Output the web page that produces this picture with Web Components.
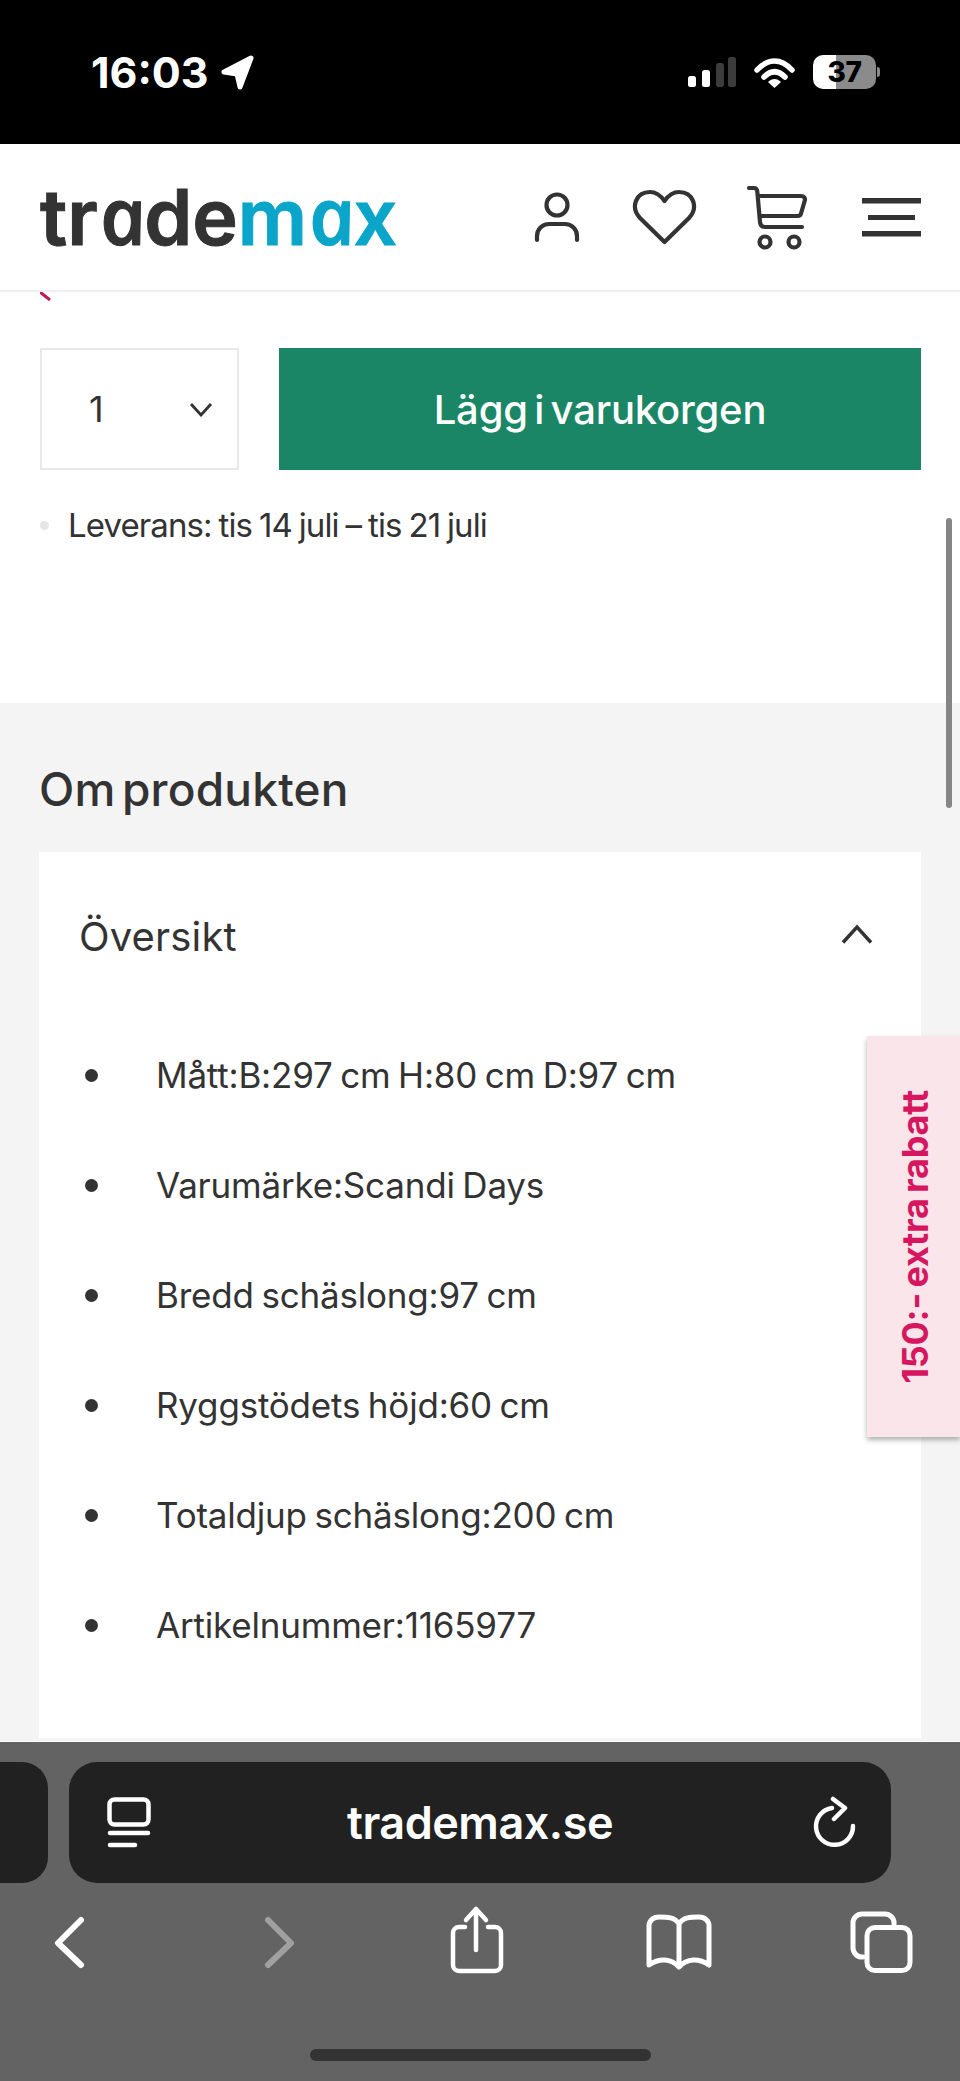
<!DOCTYPE html>
<html lang="sv">
<head>
<meta charset="utf-8">
<title>Trademax</title>
<style>
  html, body { margin: 0; background: #fff; }
  body { font-family: Inter, "Liberation Sans", sans-serif; color: #333; }
</style>
</head>
<body>
<shop-page>
  <ios-status-bar slot="top" time="16:03" battery="37"></ios-status-bar>
  <site-header slot="top"></site-header>

  <buy-box>
    <span slot="qty">1</span>
    <span slot="action">Lägg i varukorgen</span>
    <span slot="delivery">Leverans: tis 14 juli – tis 21 juli</span>
  </buy-box>

  <product-section heading="Om produkten">
    <accordion-card title="Översikt">
      <spec-item>Mått:B:297 cm H:80 cm D:97 cm</spec-item>
      <spec-item>Varumärke:Scandi Days</spec-item>
      <spec-item>Bredd schäslong:97 cm</spec-item>
      <spec-item>Ryggstödets höjd:60 cm</spec-item>
      <spec-item>Totaldjup schäslong:200 cm</spec-item>
      <spec-item>Artikelnummer:1165977</spec-item>
    </accordion-card>
  </product-section>

  <promo-tab slot="overlay">150:- extra rabatt</promo-tab>
  <safari-toolbar slot="bottom" url="trademax.se"></safari-toolbar>
</shop-page>

<script>
class ShopPage extends HTMLElement {
  constructor() {
    super();
    this.attachShadow({ mode: 'open' });
    this.shadowRoot.innerHTML = `
      <style>
        :host { display: flex; flex-direction: column; width: 960px; height: 2081px; overflow: hidden; background: #fff; }
        .content { position: relative; flex: 1; min-height: 0; overflow: hidden; }
        .thumb { position: absolute; top: 226px; right: 8px; width: 6px; height: 290px; border-radius: 3px; background: #858585; }
      </style>
      <slot name="top"></slot>
      <div class="content">
        <slot></slot>
        <div class="thumb"></div>
        <slot name="overlay"></slot>
      </div>
      <slot name="bottom"></slot>
    `;
  }
}

class IosStatusBar extends HTMLElement {
  constructor() {
    super();
    this.attachShadow({ mode: 'open' });
    const time = this.getAttribute('time') || '';
    const battery = this.getAttribute('battery') || '';
    this.shadowRoot.innerHTML = `
      <style>
        :host { display: flex; align-items: center; height: 144px; box-sizing: border-box; padding: 0 80px 0 91px; background: #000; color: #fff; }
        .time { font: 700 43px/1 Inter, sans-serif; }
        .arrow { margin-left: 12px; }
        .right { margin-left: auto; display: flex; align-items: center; }
        .wifi { margin-left: 18px; }
        .battery { position: relative; margin-left: 18px; width: 63px; height: 34px; border-radius: 10px; overflow: hidden;
          background: linear-gradient(90deg, #fff 0 23px, #8b8b8b 23px); color: #000;
          font: 800 28px/34px Inter, sans-serif; text-align: center; letter-spacing: -0.5px; }
        .nub { width: 3px; height: 10px; margin-left: 1px; border-radius: 0 3px 3px 0; background: #8b8b8b; }
      </style>
      <span class="time">${time}</span>
      <svg class="arrow" width="34" height="35" viewBox="220 55 34 35">
        <path d="M250 58 L223 72 L236 74 L239 87 Z" fill="#fff" stroke="#fff" stroke-width="5" stroke-linejoin="round"/>
      </svg>
      <div class="right">
        <svg width="48" height="31" viewBox="688 56 48 31">
          <rect x="688" y="75" width="8" height="11" rx="2.5" fill="#fff"/>
          <rect x="702" y="69" width="8" height="17" rx="2.5" fill="#fff"/>
          <rect x="716" y="62" width="8" height="24" rx="2.5" fill="#3c3c3c"/>
          <rect x="728" y="56" width="8" height="30" rx="2.5" fill="#3c3c3c"/>
        </svg>
        <svg class="wifi" width="41" height="32" viewBox="754 56 41 32">
          <path d="M757 70 C768 58 781 58 792 70" fill="none" stroke="#fff" stroke-width="5.5" stroke-linecap="round"/>
          <path d="M764 77 C771 70 778 70 785 77" fill="none" stroke="#fff" stroke-width="5.5" stroke-linecap="round"/>
          <path d="M768 82 C772 78 777 78 781 82 L774.500 88 Z" fill="#fff"/>
        </svg>
        <div class="battery">${battery}</div>
        <div class="nub"></div>
      </div>
    `;
  }
}

class SiteHeader extends HTMLElement {
  constructor() {
    super();
    this.attachShadow({ mode: 'open' });
    this.shadowRoot.innerHTML = `
      <style>
        :host { display: flex; align-items: center; height: 148px; box-sizing: border-box; padding-left: 40px; background: #fff; border-bottom: 2px solid #f0f0f0; }
        .logo { font: 600 77px/1 Inter, sans-serif; letter-spacing: 0; color: #333; -webkit-text-stroke: 1px currentColor; margin-top: -4px; white-space: nowrap; }
        .logo b { font-weight: inherit; color: #0aa5c9; }
        /* single-storey a: Open Sans italic, skewed back upright */
        .a { display: inline-block; font-family: "Open Sans", sans-serif; font-style: italic; font-weight: 600; font-size: 80px; line-height: 1; transform: skewX(11deg); }
        .icons { margin-left: auto; display: flex; align-items: flex-start; height: 70px; padding-right: 39px; }
        svg { fill: none; stroke: #333; stroke-width: 4.2; stroke-linecap: round; stroke-linejoin: round; display: block; }
        .heart { margin-left: 48px; }
        .cart { margin-left: 47px; }
        .menu { margin-left: 54px; }
      </style>
      <div class="logo">tr<span class="a">a</span>de<b>m<span class="a">a</span>x</b></div>
      <div class="icons">
        <svg class="person" width="52" height="70" viewBox="531 182 52 70">
          <circle cx="557" cy="205" r="10.500"/>
          <path d="M537 240 v-4 a12 12 0 0 1 12 -12 h16 a12 12 0 0 1 12 12 v4"/>
        </svg>
        <svg class="heart" width="68" height="70" viewBox="631 182 68 70">
          <path d="M664.500 242 L640 218 C630 207 636 192 650 192 C656 192 661 196 664.500 201 C668 196 673 192 679 192 C693 192 699 207 689 218 Z"/>
        </svg>
        <svg class="cart" width="62" height="70" viewBox="746 182 62 70">
          <path d="M749 188 h5 c2 0 3 1.500 3.300 3.500 L760 222 c0.300 3 2 5 5 5 h37"/>
          <path d="M758 196 h43 c3 0 4.500 2 3.800 4.500 l-3.800 13 c-0.500 1.800 -1.500 2.500 -3 2.500 h-37"/>
          <circle cx="765" cy="242" r="5.500"/>
          <circle cx="794" cy="242" r="5.500"/>
        </svg>
        <svg class="menu" width="59" height="70" viewBox="862 182 59 70">
          <rect x="862" y="198" width="59" height="5.500" fill="#333" stroke="none"/>
          <rect x="868" y="215" width="47" height="5" fill="#333" stroke="none"/>
          <rect x="862" y="231" width="59" height="5.500" fill="#333" stroke="none"/>
        </svg>
      </div>
    `;
  }
}

class BuyBox extends HTMLElement {
  constructor() {
    super();
    this.attachShadow({ mode: 'open' });
    this.shadowRoot.innerHTML = `
      <style>
        :host { display: block; height: 411px; box-sizing: border-box; padding: 0 39px 0 40px; background: #fff; }
        .clip { height: 56px; }
        .clip svg { display: block; }
        .row { display: flex; height: 122px; gap: 40px; }
        .qty { display: flex; align-items: center; width: 199px; box-sizing: border-box; padding: 0 24px 0 47px; border: 2.500px solid #e9e9e9; font-size: 36px; font-weight: 400; color: #333; }
        .qty svg { margin-left: auto; }
        .action { flex: 1; display: flex; align-items: center; justify-content: center; background: #1a8665; color: #fff; font-size: 40px; font-weight: 500; letter-spacing: -0.2px; word-spacing: -4px; }
        .delivery { display: flex; align-items: center; margin-top: 33px; height: 44px; font-size: 33px; letter-spacing: -0.9px; word-spacing: -1.5px; color: #333; }
        .dot { width: 9px; height: 9px; margin-right: 19px; border-radius: 50%; background: #e6e6e6; }
      </style>
      <div class="clip">
        <svg width="14" height="10" viewBox="0 0 14 10"><path d="M0 0 L10 8" stroke="#c2185b" stroke-width="3" fill="none"/></svg>
      </div>
      <div class="row">
        <div class="qty">
          <slot name="qty"></slot>
          <svg width="24" height="15" viewBox="0 0 24 15"><path d="M2 2 L12 13 L22 2" fill="none" stroke="#333" stroke-width="2.800"/></svg>
        </div>
        <div class="action"><slot name="action"></slot></div>
      </div>
      <div class="delivery"><span class="dot"></span><slot name="delivery"></slot></div>
    `;
  }
}

class ProductSection extends HTMLElement {
  constructor() {
    super();
    this.attachShadow({ mode: 'open' });
    this.shadowRoot.innerHTML = `
      <style>
        :host { display: block; box-sizing: border-box; padding: 58px 39px 0; background: #f4f4f4; height: 1039px; }
        h2 { margin: 0 0 35px 0; font: 500 46px/56px Inter, sans-serif; letter-spacing: 0.2px; word-spacing: -6px; color: #333; }
      </style>
      <h2>${this.getAttribute('heading') || ''}</h2>
      <slot></slot>
    `;
  }
}

class AccordionCard extends HTMLElement {
  constructor() {
    super();
    this.attachShadow({ mode: 'open' });
    this.shadowRoot.innerHTML = `
      <style>
        :host { display: block; height: 886px; background: #fff; }
        .head { display: flex; align-items: center; height: 168px; box-sizing: border-box; padding: 0 48px 0 40px; font-size: 40px; letter-spacing: 0.16px; color: #333; }
        .head svg { margin-left: auto; margin-top: -4px; }
        .list { display: flex; flex-direction: column; }
      </style>
      <div class="head">
        <span>${this.getAttribute('title') || ''}</span>
        <svg width="32" height="22" viewBox="0 0 32 22"><path d="M2 19.500 L16 4 L30 19.500" fill="none" stroke="#333" stroke-width="3.500"/></svg>
      </div>
      <div class="list"><slot></slot></div>
    `;
  }
}

class SpecItem extends HTMLElement {
  constructor() {
    super();
    this.attachShadow({ mode: 'open' });
    this.shadowRoot.innerHTML = `
      <style>
        :host { display: flex; align-items: center; height: 110px; padding-left: 46px; font-size: 35px; letter-spacing: -0.2px; word-spacing: -2px; color: #333; }
        .bullet { flex: none; width: 13px; height: 13px; border-radius: 50%; background: #333; margin-right: 58px; }
      </style>
      <span class="bullet"></span><slot></slot>
    `;
  }
}

class PromoTab extends HTMLElement {
  constructor() {
    super();
    this.attachShadow({ mode: 'open' });
    this.shadowRoot.innerHTML = `
      <style>
        :host { position: absolute; top: 744px; right: 0; width: 93px; height: 401px; box-sizing: border-box; padding-left: 2px; display: flex; align-items: center; justify-content: center; background: #f9e5ea; box-shadow: 0 3px 5px rgba(0,0,0,.3); color: #d6175f; }
        span { writing-mode: vertical-rl; transform: rotate(180deg); font: 700 36px/1 Inter, sans-serif; letter-spacing: -0.2px; word-spacing: -3px; white-space: nowrap; }
      </style>
      <span><slot></slot></span>
    `;
  }
}

class SafariToolbar extends HTMLElement {
  constructor() {
    super();
    this.attachShadow({ mode: 'open' });
    this.shadowRoot.innerHTML = `
      <style>
        :host { display: block; height: 340px; box-sizing: border-box; padding-top: 20px; background: #636363; border-top: 1px solid #fff; }
        svg { display: block; fill: none; stroke: #fff; stroke-linecap: round; stroke-linejoin: round; }
        .pills { display: flex; gap: 21px; height: 121px; }
        .prev { width: 48px; background: #212121; border-radius: 0 26px 26px 0; }
        .url { position: relative; width: 822px; display: flex; align-items: center; justify-content: space-between; box-sizing: border-box; padding: 0 34px 0 38px; background: #212121; border-radius: 28px; }
        .url span { font: 600 45px/1 Inter, sans-serif; letter-spacing: -0.5px; color: #fff; margin-right: 4px; }
        .nav { display: flex; margin-top: 22px; padding-left: 50px; }
        .fwd { margin-left: 174px; }
        .share { margin-left: 147px; }
        .book { margin-left: 135px; }
        .tabs { margin-left: 131px; }
        .home { width: 341px; height: 12px; margin: 74px 0 0 310px; border-radius: 6px; background: #333; }
      </style>
      <div class="pills">
        <div class="prev"></div>
        <div class="url">
          <svg width="44" height="52" viewBox="108 1797 44 52" stroke-width="4.500">
            <rect x="110.500" y="1799.500" width="39" height="25" rx="5"/>
            <path d="M111 1833 H149 M111 1845 H136"/>
          </svg>
          <span>${this.getAttribute('url') || ''}</span>
          <svg width="44" height="54" viewBox="814 1794 44 54" stroke-width="4.500">
            <path d="M833 1806 A18.500 18.500 0 1 0 854 1824"/>
            <path d="M834 1797 L846 1806 L835 1817"/>
          </svg>
        </div>
      </div>
      <div class="nav">
        <svg width="38" height="70" viewBox="50 1905 38 70" stroke-width="6"><path d="M81 1920 L58 1943 L81 1965"/></svg>
        <svg class="fwd" width="38" height="70" viewBox="262 1905 38 70" stroke-width="6" style="stroke:#a0a0a0"><path d="M268 1920 L291 1943 L268 1965"/></svg>
        <svg class="share" width="60" height="70" viewBox="448 1905 60 70" stroke-width="4.500">
          <path d="M466 1927 H460 a6 6 0 0 0 -6 6 V1965 a6 6 0 0 0 6 6 H496 a6 6 0 0 0 6 -6 V1933 a6 6 0 0 0 -6 -6 H489"/>
          <path d="M477 1950 V1909 M467 1920 L477 1909 L487 1920"/>
        </svg>
        <svg class="book" width="74" height="70" viewBox="643 1905 74 70" stroke-width="5">
          <path d="M680 1924 C676 1917 668 1917 660 1917 C654 1917 650 1921 650 1926 V1965 C660 1958 672 1958 680 1967 C688 1958 700 1958 710 1965 V1926 C710 1921 706 1917 700 1917 C692 1917 684 1917 680 1924 V1965"/>
        </svg>
        <svg class="tabs" width="68" height="70" viewBox="848 1905 68 70" stroke-width="5">
          <path d="M864 1957 h-1 a9 9 0 0 1 -9 -9 V1923 a9 9 0 0 1 9 -9 H886 a9 9 0 0 1 9 9 v4"/>
          <rect x="868" y="1927.500" width="43" height="43" rx="8"/>
        </svg>
      </div>
      <div class="home"></div>
    `;
  }
}

customElements.define('shop-page', ShopPage);
customElements.define('ios-status-bar', IosStatusBar);
customElements.define('site-header', SiteHeader);
customElements.define('buy-box', BuyBox);
customElements.define('product-section', ProductSection);
customElements.define('accordion-card', AccordionCard);
customElements.define('spec-item', SpecItem);
customElements.define('promo-tab', PromoTab);
customElements.define('safari-toolbar', SafariToolbar);
</script>
</body>
</html>
